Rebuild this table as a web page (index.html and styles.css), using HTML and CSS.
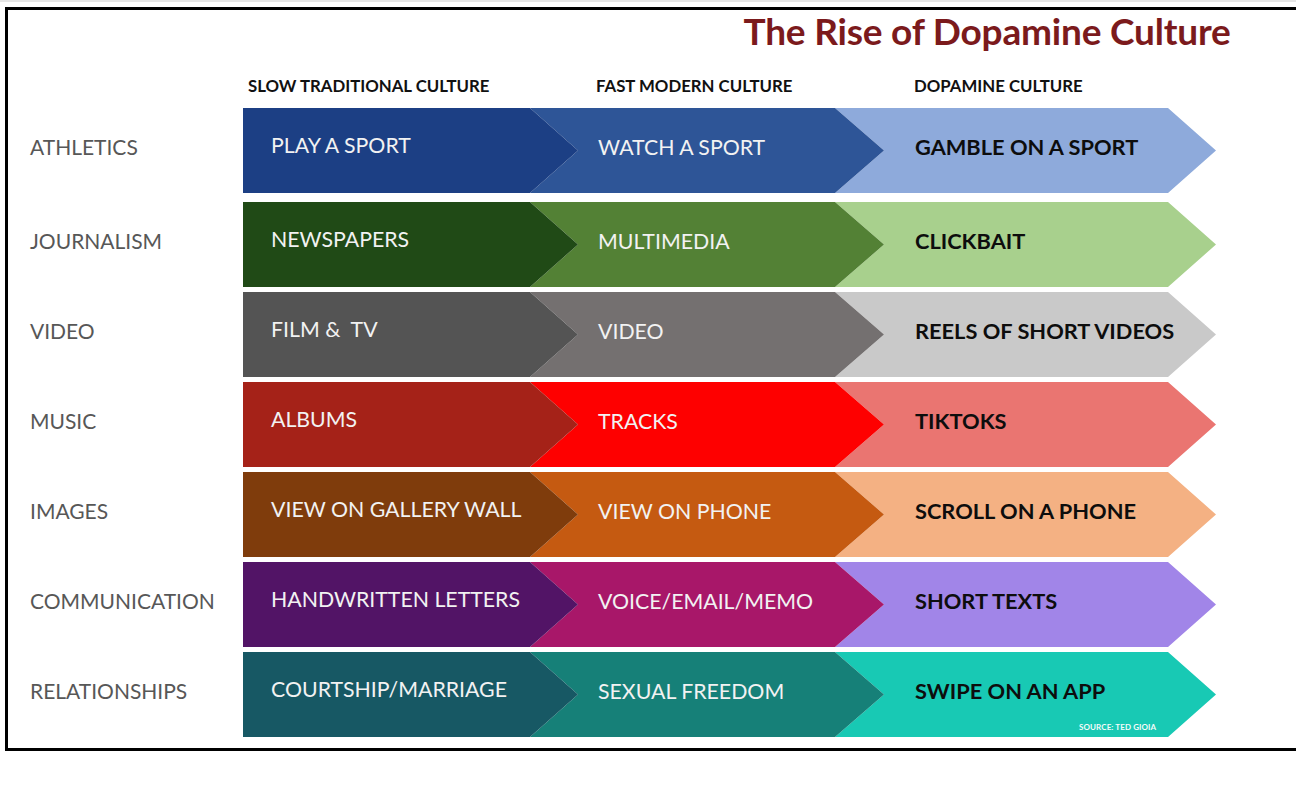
FILE: index.html
```html
<!DOCTYPE html>
<html lang="en">
<head>
<meta charset="utf-8">
<title>The Rise of Dopamine Culture</title>
<link rel="stylesheet" href="styles.css">
</head>
<body>
<div class="frame">
  <h1 class="title">The Rise of Dopamine Culture</h1>
  <div class="heads">
    <div class="head h1">SLOW TRADITIONAL CULTURE</div>
    <div class="head h2">FAST MODERN CULTURE</div>
    <div class="head h3">DOPAMINE CULTURE</div>
  </div>
  <div class="rows">
    <div class="row r-athletics first">
      <div class="label">ATHLETICS</div>
      <div class="chev c1">PLAY A SPORT</div>
      <div class="chev c2">WATCH A SPORT</div>
      <div class="chev c3">GAMBLE ON A SPORT</div>
    </div>
    <div class="row r-journalism">
      <div class="label">JOURNALISM</div>
      <div class="chev c1">NEWSPAPERS</div>
      <div class="chev c2">MULTIMEDIA</div>
      <div class="chev c3">CLICKBAIT</div>
    </div>
    <div class="row r-video">
      <div class="label">VIDEO</div>
      <div class="chev c1">FILM &amp;&nbsp; TV</div>
      <div class="chev c2">VIDEO</div>
      <div class="chev c3">REELS OF SHORT VIDEOS</div>
    </div>
    <div class="row r-music">
      <div class="label">MUSIC</div>
      <div class="chev c1">ALBUMS</div>
      <div class="chev c2">TRACKS</div>
      <div class="chev c3">TIKTOKS</div>
    </div>
    <div class="row r-images">
      <div class="label">IMAGES</div>
      <div class="chev c1">VIEW ON GALLERY WALL</div>
      <div class="chev c2">VIEW ON PHONE</div>
      <div class="chev c3">SCROLL ON A PHONE</div>
    </div>
    <div class="row r-comm">
      <div class="label">COMMUNICATION</div>
      <div class="chev c1">HANDWRITTEN LETTERS</div>
      <div class="chev c2">VOICE/EMAIL/MEMO</div>
      <div class="chev c3">SHORT TEXTS</div>
    </div>
    <div class="row r-rel">
      <div class="label">RELATIONSHIPS</div>
      <div class="chev c1">COURTSHIP/MARRIAGE</div>
      <div class="chev c2">SEXUAL FREEDOM</div>
      <div class="chev c3">SWIPE ON AN APP<span class="source">SOURCE: TED GIOIA</span></div>
    </div>
  </div>
</div>
</body>
</html>
```

FILE: styles.css
```css
html, body {
  margin: 0;
  padding: 0;
  background: #ffffff;
  overflow: hidden;
}
body {
  width: 1296px;
  height: 785px;
  font-family: Lato, "Open Sans", sans-serif;
  border-top: 2px solid #e6e6e6;
  box-sizing: border-box;
}
.frame {
  margin: 5px 0 0 5px;
  width: 1310px;
  border-top: 3px solid #000;
  border-left: 3px solid #000;
  border-bottom: 3px solid #000;
  padding-bottom: 11px;
  box-sizing: border-box;
}
.title {
  margin: 0 0 0 719px;
  width: 520px;
  height: 48px;
  line-height: 42px;
  padding-bottom: 6px;
  box-sizing: border-box;
  text-align: center;
  font-size: 37px;
  font-weight: 700;
  color: #7b1a1c;
  letter-spacing: -0.2px;
}
.heads {
  display: flex;
  height: 50px;
  box-sizing: border-box;
  padding: 18px 0 0 235px;
  font-weight: 700;
  font-size: 16.8px;
  line-height: 20px;
  color: #111;
}
.head { box-sizing: border-box; }
.h1 { width: 287px; padding-left: 5px; }
.h2 { width: 305px; padding-left: 66px; }
.h3 { padding-left: 79px; }

.rows {
  display: flex;
  flex-direction: column;
  gap: 5px;
}
.row {
  display: flex;
  height: 85px;
  align-items: stretch;
}
.row.first { margin-bottom: 4px; }
.label {
  width: 235px;
  box-sizing: border-box;
  padding-left: 22px;
  display: flex;
  align-items: center;
  font-size: 21px;
  color: #575757;
  padding-bottom: 8px;
}
.chev {
  display: flex;
  align-items: center;
  box-sizing: border-box;
  font-size: 21.3px;
  color: #f2f2f2;
  white-space: nowrap;
  padding-bottom: 8px;
  position: relative;
}
.c1 {
  width: 335px;
  padding-left: 28px;
  padding-bottom: 12px;
  clip-path: polygon(0 0, calc(100% - 48px) 0, 100% 50%, calc(100% - 48px) 100%, 0 100%);
  z-index: 2;
}
.c2 {
  width: 354px;
  margin-left: -48px;
  padding-left: 68px;
  clip-path: polygon(0 0, calc(100% - 49px) 0, 100% 50%, calc(100% - 49px) 100%, 0 100%, 48px 50%);
  z-index: 1;
}
.c3 {
  width: 381px;
  margin-left: -49px;
  padding-left: 80px;
  font-size: 21.8px;
  font-weight: 700;
  color: #0d0d0d;
  clip-path: polygon(0 0, calc(100% - 48px) 0, 100% 50%, calc(100% - 48px) 100%, 0 100%, 49px 50%);
}

.r-athletics .c1 { background: #1c3f84; }
.r-athletics .c2 { background: #2e5597; }
.r-athletics .c3 { background: #8eaadb; }
.r-journalism .c1 { background: #204a16; }
.r-journalism .c2 { background: #538135; }
.r-journalism .c3 { background: #a8d08d; }
.r-video .c1 { background: #545454; }
.r-video .c2 { background: #747070; }
.r-video .c3 { background: #c9c9c9; }
.r-music .c1 { background: #a52218; }
.r-music .c2 { background: #fe0000; }
.r-music .c3 { background: #ea7571; }
.r-images .c1 { background: #7f3c0c; }
.r-images .c2 { background: #c55a11; }
.r-images .c3 { background: #f4b183; }
.r-comm .c1 { background: #521466; }
.r-comm .c2 { background: #a81769; }
.r-comm .c3 { background: #a185e8; }
.r-rel .c1 { background: #175864; }
.r-rel .c2 { background: #168078; }
.r-rel .c3 { background: #18c9b4; }

.source {
  position: absolute;
  left: 244px;
  bottom: 5px;
  font-size: 8px;
  font-weight: 700;
  color: #f4fbfa;
  letter-spacing: 0.1px;
}
```
